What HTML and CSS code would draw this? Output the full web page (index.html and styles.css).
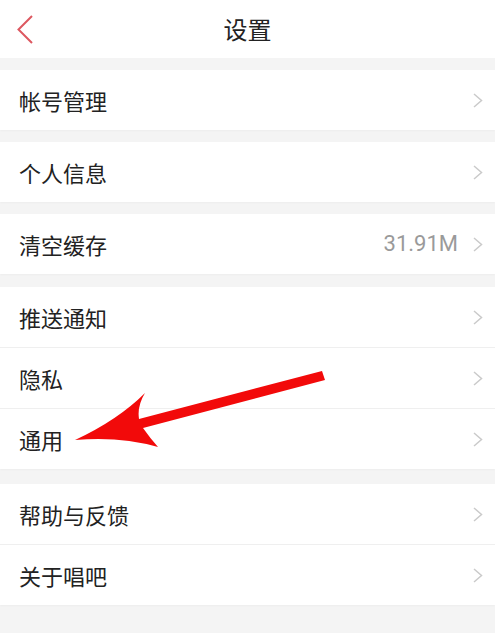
FILE: index.html
```html
<!DOCTYPE html>
<html lang="zh-CN">
<head>
<meta charset="utf-8">
<title>设置</title>
<link rel="stylesheet" href="styles.css">
</head>
<body>
<div class="page">
  <header class="header">
    <svg class="back" width="16" height="29" viewBox="0 0 16 29"><polyline points="15,1 1.5,14.5 15,28" fill="none" stroke="#dd5860" stroke-width="2"/></svg>
    <h1 class="title">设置</h1>
    <span></span>
  </header>

  <section class="card">
    <div class="row"><span class="label">帐号管理</span><svg class="chev" width="10" height="15" viewBox="0 0 10 15"><polyline points="1,1 8.5,7.5 1,14" fill="none" stroke="#cacaca" stroke-width="1.5"/></svg></div>
  </section>

  <section class="card">
    <div class="row"><span class="label">个人信息</span><svg class="chev" width="10" height="15" viewBox="0 0 10 15"><polyline points="1,1 8.5,7.5 1,14" fill="none" stroke="#cacaca" stroke-width="1.5"/></svg></div>
  </section>

  <section class="card">
    <div class="row"><span class="label">清空缓存</span><span class="value">31.91M</span><svg class="chev" width="10" height="15" viewBox="0 0 10 15"><polyline points="1,1 8.5,7.5 1,14" fill="none" stroke="#cacaca" stroke-width="1.5"/></svg></div>
  </section>

  <section class="card card-gap13">
    <div class="row"><span class="label">推送通知</span><svg class="chev" width="10" height="15" viewBox="0 0 10 15"><polyline points="1,1 8.5,7.5 1,14" fill="none" stroke="#cacaca" stroke-width="1.5"/></svg></div>
    <div class="row"><span class="label">隐私</span><svg class="chev" width="10" height="15" viewBox="0 0 10 15"><polyline points="1,1 8.5,7.5 1,14" fill="none" stroke="#cacaca" stroke-width="1.5"/></svg></div>
    <div class="row"><span class="label">通用</span><svg class="chev" width="10" height="15" viewBox="0 0 10 15"><polyline points="1,1 8.5,7.5 1,14" fill="none" stroke="#cacaca" stroke-width="1.5"/></svg></div>
  </section>

  <section class="card card-gap15">
    <div class="row"><span class="label">帮助与反馈</span><svg class="chev" width="10" height="15" viewBox="0 0 10 15"><polyline points="1,1 8.5,7.5 1,14" fill="none" stroke="#cacaca" stroke-width="1.5"/></svg></div>
    <div class="row"><span class="label">关于唱吧</span><svg class="chev" width="10" height="15" viewBox="0 0 10 15"><polyline points="1,1 8.5,7.5 1,14" fill="none" stroke="#cacaca" stroke-width="1.5"/></svg></div>
  </section>

  <svg class="arrow" width="495" height="633" viewBox="0 0 495 633">
    <path d="M75,440 Q118,420 145,393 Q137,406 139,419 L322,371 L325,380 L143,428 Q150,438 158,447 Q120,436 75,440 Z" fill="#f20a0a"/>
  </svg>
</div>
</body>
</html>
```

FILE: styles.css
```css
html, body {
  margin: 0;
  padding: 0;
  background: #f4f4f4;
}

.page {
  position: relative;
  width: 495px;
  min-height: 633px;
  font-family: "Noto Sans CJK SC", "Noto Sans", sans-serif;
  color: #222;
}

.header {
  height: 58px;
  background: #fff;
  display: grid;
  grid-template-columns: 1fr auto 1fr;
  align-items: center;
}

.back {
  justify-self: start;
  margin-left: 17px;
  margin-top: 0;
  display: block;
}

.title {
  margin: 0;
  font-size: 24px;
  font-weight: 400;
  line-height: 1;
  color: #222;
}

.card {
  background: #fff;
  margin-top: 12px;
  box-shadow: 0 1px 2px rgba(0, 0, 0, 0.03);
}

.card-gap13 {
  margin-top: 13px;
}

.card-gap15 {
  margin-top: 15px;
}

.row {
  height: 60px;
  display: flex;
  align-items: center;
  padding: 0 12px 0 19px;
}

.row + .row {
  border-top: 1px solid #efefef;
}

.label {
  flex: 1;
  font-size: 22px;
  line-height: 1;
  color: #222;
}

.value {
  font-family: Roboto, "Liberation Sans", sans-serif;
  font-size: 22px;
  color: #9a9a9a;
  margin-right: 15px;
  line-height: 1;
}

.chev {
  display: block;
}

.arrow {
  position: absolute;
  left: 0;
  top: 0;
  pointer-events: none;
}
```
